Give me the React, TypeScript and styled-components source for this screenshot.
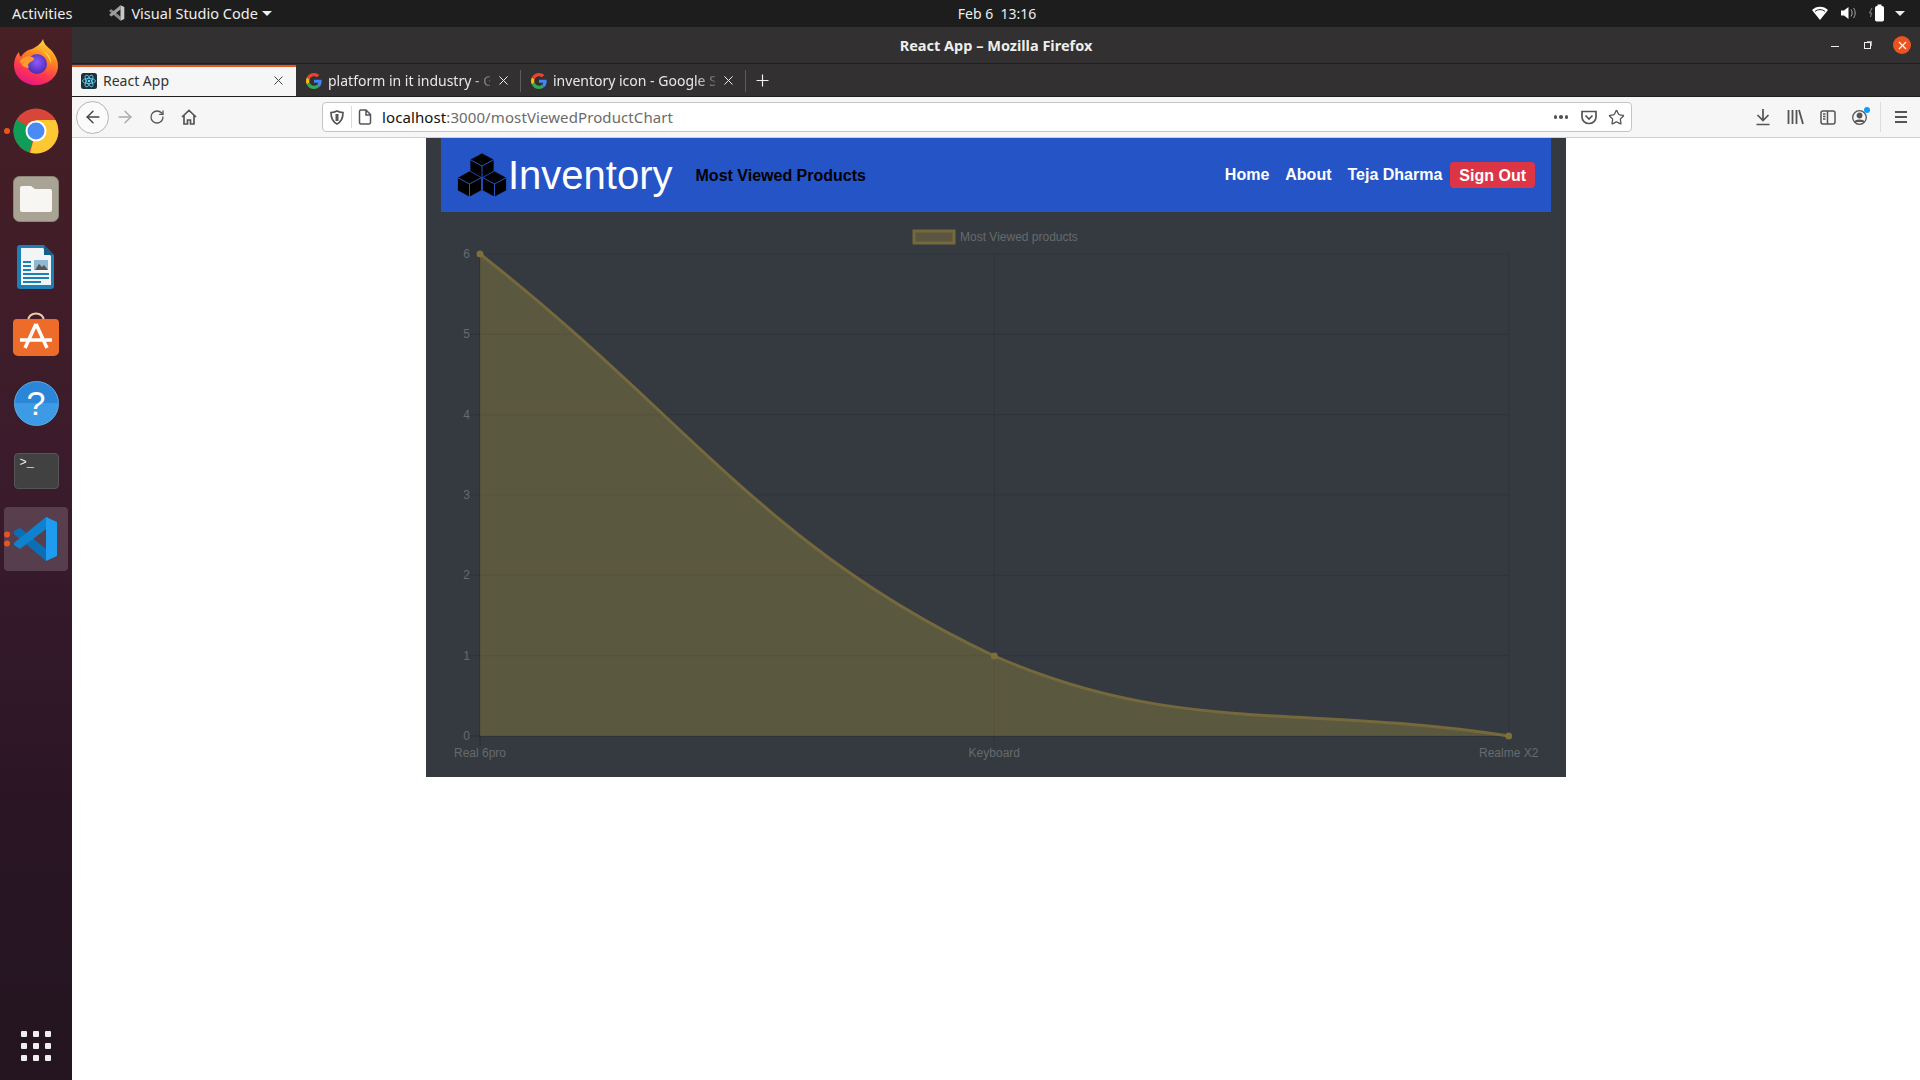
import React from 'react'
import styled, { createGlobalStyle } from 'styled-components'
import { ArrowLeft, ArrowRight, RotateCw, Star, X, Plus } from 'lucide-react'

const GlobalStyle = createGlobalStyle`
  html, body {
    margin: 0;
    padding: 0;
    height: 100%;
    background: #fff;
  }
  * {
    box-sizing: border-box;
  }
`

const UI_FONT = `'Noto Sans', 'Open Sans', sans-serif`
const PAGE_FONT = `'Liberation Sans', Arial, sans-serif`

const GoogleIcon = () => (
  <svg width="16" height="16" viewBox="0 0 48 48">
    <path fill="#EA4335" d="M24 9.5c3.5 0 6.7 1.2 9.2 3.6l6.9-6.9C35.9 2.4 30.4 0 24 0 14.6 0 6.5 5.4 2.6 13.2l8 6.2C12.5 13.6 17.8 9.5 24 9.5z" />
    <path fill="#4285F4" d="M47 24.5c0-1.6-.1-3.1-.4-4.5H24v9h12.900c-.6 3-2.200 5.500-4.700 7.200l7.700 6c4.500-4.200 7.100-10.300 7.100-17.700z" />
    <path fill="#FBBC05" d="M10.5 28.600c-.5-1.400-.8-3-.8-4.600s.3-3.200.8-4.600l-8-6.200C.9 16.400 0 20.100 0 24s.9 7.600 2.600 10.800l7.900-6.200z" />
    <path fill="#34A853" d="M24 48c6.500 0 11.900-2.100 15.900-5.800l-7.700-6c-2.100 1.400-4.900 2.300-8.200 2.300-6.200 0-11.500-4.200-13.400-9.800l-8 6.200C6.500 42.600 14.600 48 24 48z" />
  </svg>
)

const ReactIcon = () => (
  <svg width="16" height="16" viewBox="0 0 16 16">
    <rect width="16" height="16" rx="2.5" fill="#20303a" />
    <g fill="none" stroke="#61dafb" strokeWidth="0.8">
      <ellipse cx="8" cy="8" rx="6.5" ry="2.6" />
      <ellipse cx="8" cy="8" rx="6.5" ry="2.6" transform="rotate(60 8 8)" />
      <ellipse cx="8" cy="8" rx="6.5" ry="2.6" transform="rotate(120 8 8)" />
    </g>
    <circle cx="8" cy="8" r="1.3" fill="#61dafb" />
  </svg>
)

const FirefoxIcon = () => (
  <FirefoxSvg width="46" height="48" viewBox="0 0 46 48">
    <defs>
      <linearGradient id="ffBody" x1="0.7" y1="0" x2="0.3" y2="1">
        <stop offset="0" stopColor="#ffe23f" />
        <stop offset="0.35" stopColor="#ff8a1f" />
        <stop offset="0.7" stopColor="#ff3750" />
        <stop offset="1" stopColor="#e31587" />
      </linearGradient>
      <radialGradient id="ffGlobe" cx="0.5" cy="0.4" r="0.6">
        <stop offset="0" stopColor="#9059ff" />
        <stop offset="1" stopColor="#4b2bb0" />
      </radialGradient>
    </defs>
    <path d="M30 1c1 6 5 8 9 12 4 5 6 10 6 15 0 11-10 19-22 19S1 39 1 27c0-5 2-10 5-13 0 2 1 4 2 5 2-4 6-7 11-8 4-2 9-5 11-10z" fill="url(#ffBody)" />
    <circle cx="24" cy="26" r="10" fill="url(#ffGlobe)" />
    <path d="M7 23c3-4 8-6 12-4 3 1 3 3 0 4-3 2-5 3-3 7-5 0-8-3-9-7z" fill="#ff9a2a" />
    <path d="M30 13c5 2 9 7 8 13-1-4-3-8-8-13z" fill="#ffd23a" />
  </FirefoxSvg>
)

const ChromeIcon = () => (
  <svg width="46" height="46" viewBox="0 0 46 46">
    <circle cx="23" cy="23" r="22.5" fill="#d8463a" />
    <path d="M23 23 L3.5 11.7 A22.5 22.5 0 0 0 16 44.4 Z" fill="#109d58" />
    <path d="M23 12 L42.5 12 A22.5 22.5 0 0 1 17 44.7 L23 23 Z" fill="#fcc934" />
    <circle cx="23" cy="23" r="10.5" fill="#fff" />
    <circle cx="23" cy="23" r="8.5" fill="#4a8af4" />
  </svg>
)

const FilesIcon = () => (
  <svg width="46" height="46" viewBox="0 0 46 46">
    <rect x="0.5" y="0.5" width="45" height="45" rx="6" fill="#a8a394" stroke="#8c8778" />
    <path d="M7 12a2 2 0 0 1 2-2h9l4 3h15a2 2 0 0 1 2 2v19a2 2 0 0 1-2 2H9a2 2 0 0 1-2-2z" fill="#f7f6f3" />
  </svg>
)

const WriterIcon = () => (
  <svg width="38" height="46" viewBox="0 0 38 46">
    <path d="M3 1h24l10 10v31a3 3 0 0 1-3 3H3a3 3 0 0 1-3-3V4a3 3 0 0 1 3-3z" fill="#1c7fb5" />
    <path d="M4 4h22l8 8v29H4z" fill="#f2f4f6" />
    <path d="M27 1l10 10H27z" fill="#145f8c" />
    <rect x="17" y="16" width="14" height="10" fill="#8eb8d4" />
    <path d="M18 26l4-6 3 3 2-2 4 5z" fill="#555" />
    <g fill="#1c7fb5">
      <rect x="6" y="17" width="8" height="2" />
      <rect x="6" y="21" width="8" height="2" />
      <rect x="6" y="25" width="8" height="2" />
      <rect x="6" y="29" width="26" height="2" />
      <rect x="6" y="33" width="26" height="2" />
      <rect x="6" y="37" width="18" height="2" />
    </g>
  </svg>
)

const StoreIcon = () => (
  <svg width="46" height="46" viewBox="0 0 46 46">
    <path d="M15 9c0-10 16-10 16 0" fill="none" stroke="#f3c9a5" strokeWidth="2" />
    <path d="M4 7h38a4 4 0 0 1 4 4v28a5 5 0 0 1-5 5H5a5 5 0 0 1-5-5V11a4 4 0 0 1 4-4z" fill="#ee6c2a" />
    <path d="M23 12L12 36M23 12l11 24M7 28h32" stroke="#fff" strokeWidth="3.5" fill="none" />
  </svg>
)

const HelpIcon = () => <HelpBadge>?</HelpBadge>

const TerminalIcon = () => <TerminalBadge>&gt;_</TerminalBadge>

const VsCodeIcon = ({ size = 46, mono = false }: { size?: number; mono?: boolean }) => (
  <svg width={size} height={size} viewBox="0 0 46 46">
    <path d="M7 12L33 33V45L1 18V15z" fill={mono ? '#8a8a8a' : '#0a6fb5'} />
    <path d="M33 1V13L7 33 1 29V27z" fill={mono ? '#a0a0a0' : '#0f82cf'} />
    <path d="M33 1L44 6V40L33 45z" fill={mono ? '#c8c8c8' : '#1f9cf0'} />
  </svg>
)

// three stacked cubes of the navbar logo
const cubes = [
  { x: 25, y: 0 },
  { x: 12.5, y: 18 },
  { x: 37.5, y: 18 }
]

const CubesLogo = () => (
  <svg width="50" height="44" viewBox="0 0 50 44">
    {cubes.map(c => (
      <g key={c.x} transform={`translate(${c.x} ${c.y})`}>
        <path d="M0 0L12 6.5V19.500L0 26-12 19.500V6.500z" fill="#000" stroke="#2554c7" strokeWidth="0.8" />
        <path d="M-12 6.500L0 13 12 6.500M0 13V26" fill="none" stroke="#2554c7" strokeWidth="1" />
      </g>
    ))}
  </svg>
)

const dockApps: { icon: React.ReactNode; dots?: number; active?: boolean }[] = [
  { icon: <FirefoxIcon /> },
  { icon: <ChromeIcon />, dots: 1 },
  { icon: <FilesIcon /> },
  { icon: <WriterIcon /> },
  { icon: <StoreIcon /> },
  { icon: <HelpIcon /> },
  { icon: <TerminalIcon /> },
  { icon: <VsCodeIcon />, dots: 2, active: true }
]

const gridColor = '#2f343a'
const axisColor = '#282c31'
const labelColor = '#676a6c'

const plotX = [39, 553.3, 1067.7]
const yTicks = [6, 5, 4, 3, 2, 1, 0].map((v, i) => ({ v, y: 42 + (i * 482) / 6 }))
const xLabels = ['Real 6pro', 'Keyboard', 'Realme X2']

const curve = 'M39 42 C244.7 202.8 324.4 336.7 553.3 444 C735.9 524 862 492 1067.7 524'

const Chart = () => (
  <ChartSvg viewBox="0 0 1110 565">
    <rect x="473" y="19" width="40" height="12" fill="#5c5640" stroke="#75683c" strokeWidth="3" />
    <text x="519" y="29" fontSize="12" fill={labelColor} fontFamily={PAGE_FONT}>
      Most Viewed products
    </text>

    {yTicks.map(t => (
      <g key={t.v}>
        <line x1="29" x2="1068" y1={t.y} y2={t.y} stroke={t.v === 0 ? axisColor : gridColor} />
        <text x="29" y={t.y + 4} fontSize="12" textAnchor="end" fill={labelColor} fontFamily={PAGE_FONT}>
          {t.v}
        </text>
      </g>
    ))}
    {plotX.map((x, i) => (
      <g key={x}>
        <line x1={x} x2={x} y1="42" y2="534" stroke={i === 0 ? axisColor : gridColor} />
        <text x={x} y="545" fontSize="12" textAnchor="middle" fill={labelColor} fontFamily={PAGE_FONT}>
          {xLabels[i]}
        </text>
      </g>
    ))}

    <path d={`${curve} L39 524 Z`} fill="#b39b3c" fillOpacity="0.31" />
    <path d={curve} fill="none" stroke="#75683c" strokeWidth="3" />
    <circle cx="39" cy="42" r="3.5" fill="#7d6e3c" />
    <circle cx="553.3" cy="444" r="3.5" fill="#7d6e3c" />
    <circle cx="1067.7" cy="524" r="3.5" fill="#7d6e3c" />
  </ChartSvg>
)

const App: React.FC = () => (
  <Desktop>
    <GlobalStyle />

    <TopBar>
      <TopLeft>
        <span>Activities</span>
        <AppMenu>
          <VsCodeIcon size={16} mono />
          <span>Visual Studio Code</span>
          <MenuCaret />
        </AppMenu>
      </TopLeft>
      <Clock>Feb 6&nbsp;&nbsp;13:16</Clock>
      <TopRight>
        <svg width="16" height="14" viewBox="0 0 16 14">
          <path d="M0 4C4-.5 12-.5 16 4L8 14z" fill="#fff" />
          <path d="M3 5.5C5.5 3 10.5 3 13 5.5" stroke="#1d1d1d" strokeWidth="1" fill="none" />
        </svg>
        <svg width="15" height="14" viewBox="0 0 15 14">
          <path d="M0 4.5h3L7.5 1v12L3 9.5H0z" fill="#fff" />
          <path d="M10 3.5c1.5 2 1.5 5 0 7M12.5 2c2.2 3 2.2 7 0 10" stroke="#aaa" strokeWidth="1" fill="none" />
        </svg>
        <svg width="15" height="18" viewBox="0 0 15 18">
          <path d="M3 4L0.5 9H2.5L1.5 13" stroke="#888" strokeWidth="1" fill="none" />
          <rect x="6.5" y="2.5" width="8" height="14.5" rx="1" fill="#fff" stroke="#fff" />
          <rect x="8.5" y="0.5" width="4" height="2" fill="#fff" />
        </svg>
        <TrayCaret />
      </TopRight>
    </TopBar>

    <Workspace>
      <Dock>
        {dockApps.map((app, i) => (
          <DockItem key={i} $active={app.active}>
            {app.dots ? (
              <DockDots>
                {Array.from({ length: app.dots }).map((_, d) => (
                  <DockDot key={d} />
                ))}
              </DockDots>
            ) : null}
            {app.icon}
          </DockItem>
        ))}
        <AppGrid>
          {Array.from({ length: 9 }).map((_, i) => (
            <AppGridDot key={i} />
          ))}
        </AppGrid>
      </Dock>

      <Browser>
        <TitleBar>
          <TitleText>React App – Mozilla Firefox</TitleText>
          <WindowControls>
            <MinimizeMark />
            <RestoreMark />
            <CloseCircle>
              <X size={13} strokeWidth={2} />
            </CloseCircle>
          </WindowControls>
        </TitleBar>

        <TabBar>
          <ActiveTab>
            <ReactIcon />
            <TabTitle>React App</TabTitle>
            <X size={15} strokeWidth={1.6} color="#444" />
          </ActiveTab>
          <Tab>
            <GoogleIcon />
            <FadedTitle>platform in it industry - G</FadedTitle>
            <X size={15} strokeWidth={1.6} color="#eee" />
          </Tab>
          <Tab>
            <GoogleIcon />
            <FadedTitle>inventory icon - Google S</FadedTitle>
            <X size={15} strokeWidth={1.6} color="#eee" />
          </Tab>
          <NewTab>
            <Plus size={19} strokeWidth={1.5} color="#f0f0f0" />
          </NewTab>
        </TabBar>

        <Toolbar>
          <BackButton>
            <ArrowLeft size={20} strokeWidth={1.7} color="#444" />
          </BackButton>
          <ToolButton>
            <ArrowRight size={20} strokeWidth={1.7} color="#aaa" />
          </ToolButton>
          <ToolButton>
            <RotateCw size={16} strokeWidth={1.9} color="#555" />
          </ToolButton>
          <ToolButton>
            <svg width="16" height="16" viewBox="0 0 16 16" fill="none" stroke="#555" strokeWidth="1.7">
              <path d="M1 8l7-6.5L15 8M3 6.5V15h3.5v-4h3v4H13V6.5" />
            </svg>
          </ToolButton>

          <UrlBar>
            <UrlIcon>
              <svg width="14" height="15" viewBox="0 0 14 15" fill="none" stroke="#555" strokeWidth="1.7">
                <path d="M1 2.5C3 2.5 5 2 7 1c2 1 4 1.5 6 1.5 0 5-1 9-6 11.5C2 11.5 1 7.5 1 2.5z" />
                <path d="M7 4v7" strokeWidth="3" />
              </svg>
            </UrlIcon>
            <UrlDivider />
            <UrlIcon>
              <svg width="14" height="16" viewBox="0 0 14 16" fill="none" stroke="#555" strokeWidth="1.5">
                <path d="M1.5 2.5a1.5 1.5 0 0 1 1.5-1.5h5l4.5 4.5v8a1.5 1.5 0 0 1-1.5 1.5H3a1.5 1.5 0 0 1-1.5-1.5zM8 1v5h4.5" />
              </svg>
            </UrlIcon>
            <UrlText>
              <strong>localhost</strong>:3000/mostViewedProductChart
            </UrlText>
            <UrlActions>
              <MoreDots>
                <i />
                <i />
                <i />
              </MoreDots>
              <svg width="16" height="16" viewBox="0 0 16 16" fill="none" stroke="#555" strokeWidth="1.7">
                <path d="M1 2.5h14V8c0 3.5-3 6.5-7 6.5S1 11.5 1 8z" />
                <path d="M4.5 6.5L8 10l3.5-3.5" />
              </svg>
              <Star size={17} strokeWidth={1.8} color="#555" />
            </UrlActions>
          </UrlBar>

          <RightTools>
            <svg width="16" height="18" viewBox="0 0 16 18" fill="none" stroke="#555" strokeWidth="1.7">
              <path d="M8 1v11M2.5 7L8 12.5 13.5 7M1.5 16.5h13" />
            </svg>
            <svg width="17" height="16" viewBox="0 0 17 16" fill="none" stroke="#555" strokeWidth="1.8">
              <path d="M1.5 1v14M5.5 1v14M9.5 1v14M12 1l4 14" />
            </svg>
            <svg width="16" height="15" viewBox="0 0 16 15" fill="none" stroke="#555" strokeWidth="1.5">
              <rect x="1" y="1" width="14" height="13" rx="2" />
              <path d="M7.5 1v13M3 4h2.5M3 6.5h2.5M3 9h2.5" />
            </svg>
            <AccountIcon>
              <svg width="15" height="15" viewBox="0 0 15 15" fill="none" stroke="#555" strokeWidth="1.3">
                <circle cx="7.5" cy="7.5" r="6.8" />
                <circle cx="7.5" cy="5.5" r="2.3" fill="#555" />
                <path d="M3 12c1-2.5 8-2.5 9 0" fill="#555" />
              </svg>
              <AccountBadge />
            </AccountIcon>
            <ToolSeparator />
            <svg width="14" height="14" viewBox="0 0 14 14" stroke="#555" strokeWidth="1.8">
              <path d="M1 2h12M1 7h12M1 12h12" />
            </svg>
          </RightTools>
        </Toolbar>

        <Page>
          <Container>
            <Navbar>
              <Brand>
                <CubesLogo />
                <BrandName>Inventory</BrandName>
              </Brand>
              <PageTitle>Most Viewed Products</PageTitle>
              <NavLinks>
                <NavLink>Home</NavLink>
                <NavLink>About</NavLink>
                <NavLink>Teja Dharma</NavLink>
                <SignOut>Sign Out</SignOut>
              </NavLinks>
            </Navbar>
            <Chart />
          </Container>
        </Page>
      </Browser>
    </Workspace>
  </Desktop>
)

const Desktop = styled.div`
  width: 1920px;
  height: 1080px;
  display: flex;
  flex-direction: column;
  overflow: hidden;
  font-family: ${UI_FONT};
`

const TopBar = styled.header`
  height: 27px;
  flex: none;
  background: #1d1d1d;
  color: #eee;
  font-size: 14.5px;
  display: grid;
  grid-template-columns: 945px 80px 1fr;
  align-items: center;
  padding: 0 12px 1px;
`

const TopLeft = styled.div`
  display: flex;
  align-items: center;
  gap: 37px;
`

const AppMenu = styled.div`
  display: flex;
  align-items: center;
  gap: 6px;
`

const Caret = styled.span`
  width: 0;
  height: 0;
  border-left: 5px solid transparent;
  border-right: 5px solid transparent;
  border-top: 5px solid #eee;
`

const MenuCaret = styled(Caret)`
  margin-left: -2px;
`

const TrayCaret = styled(Caret)`
  margin-left: -2px;
`

const Clock = styled.div`
  font-size: 14px;
  text-align: center;
  white-space: nowrap;
`

const TopRight = styled.div`
  display: flex;
  align-items: center;
  justify-content: flex-end;
  gap: 13px;
  padding-right: 3px;
`

const Workspace = styled.div`
  flex: 1;
  display: flex;
  min-height: 0;
`

const Dock = styled.nav`
  width: 72px;
  flex: none;
  display: flex;
  flex-direction: column;
  padding-top: 2px;
  background: linear-gradient(180deg, #471f24 0%, #3a1b2c 45%, #2a1525 75%, #241520 100%);
`

const DockItem = styled.div<{ $active?: boolean }>`
  position: relative;
  height: 68px;
  display: flex;
  align-items: center;
  justify-content: center;

  ${p =>
    p.$active &&
    `
    &::before {
      content: '';
      position: absolute;
      inset: 2px 4px;
      border-radius: 4px;
      background: rgba(255, 255, 255, 0.16);
    }
    & > svg { position: relative; }
  `}
`

const FirefoxSvg = styled.svg`
  margin-top: -2px;
`

const DockDots = styled.div`
  position: absolute;
  left: 4px;
  top: 50%;
  transform: translateY(-50%);
  display: flex;
  flex-direction: column;
  gap: 3px;
  z-index: 1;
`

const DockDot = styled.span`
  width: 6px;
  height: 6px;
  border-radius: 50%;
  background: #e95420;
`

const HelpBadge = styled.div`
  width: 45px;
  height: 45px;
  border-radius: 50%;
  background: linear-gradient(180deg, #2c86d8 0%, #2c86d8 50%, #3d9be6 50%, #3d9be6 100%);
  border: 1px solid #5aaceb;
  color: #fff;
  font-family: ${PAGE_FONT};
  font-size: 34px;
  line-height: 43px;
  text-align: center;
`

const TerminalBadge = styled.div`
  width: 45px;
  height: 36px;
  border-radius: 4px;
  background: #414141;
  border: 1px solid #555;
  color: #eee;
  font-family: 'Liberation Mono', monospace;
  font-size: 12px;
  line-height: 12px;
  padding: 3px 5px;
`

const AppGrid = styled.div`
  margin-top: auto;
  margin-bottom: 19px;
  align-self: center;
  display: grid;
  grid-template-columns: repeat(3, 6px);
  gap: 6px;
`

const AppGridDot = styled.span`
  width: 6px;
  height: 6px;
  border-radius: 1px;
  background: #efefef;
`

const Browser = styled.main`
  flex: 1;
  min-width: 0;
  display: flex;
  flex-direction: column;
`

const TitleBar = styled.div`
  position: relative;
  height: 37px;
  flex: none;
  background: #323030;
  border-bottom: 1px solid #1e1e1e;
  display: flex;
  align-items: center;
  justify-content: center;
`

const TitleText = styled.div`
  color: #eee;
  font-size: 14.5px;
  font-weight: 700;
`

const WindowControls = styled.div`
  position: absolute;
  right: 9px;
  top: 9px;
  display: flex;
  align-items: center;
  gap: 25px;
`

const MinimizeMark = styled.span`
  width: 8px;
  height: 1px;
  margin-top: 3px;
  background: #eee;
`

const RestoreMark = styled.span`
  width: 7px;
  height: 7px;
  border: 1px solid #eee;
  box-shadow: 2px -2px 0 -1px #aaa;
  margin-right: -3px;
`

const CloseCircle = styled.span`
  width: 18px;
  height: 18px;
  border-radius: 50%;
  background: #e95420;
  color: #fff;
  display: flex;
  align-items: center;
  justify-content: center;
`

const TabBar = styled.div`
  height: 33px;
  flex: none;
  background: #323030;
  display: flex;
  align-items: stretch;
  border-bottom: 1px solid #1e1e1e;
`

const ActiveTab = styled.div`
  width: 224px;
  margin-top: 1px;
  background: #f6f6f6;
  border-top: 2px solid #e95420;
  color: #333;
  font-size: 14px;
  display: flex;
  align-items: center;
  gap: 6px;
  padding: 0 10px 2px 9px;
`

const TabTitle = styled.span`
  flex: 1;
  white-space: nowrap;
`

const Tab = styled.div`
  width: 225px;
  color: #e8e8e8;
  font-size: 14px;
  display: flex;
  align-items: center;
  gap: 6px;
  padding: 1px 10px 0 10px;
  position: relative;

  &::after {
    content: '';
    position: absolute;
    right: 0;
    top: 6px;
    bottom: 4px;
    width: 1px;
    background: #5c5a5a;
  }
`

const FadedTitle = styled.span`
  flex: 1;
  min-width: 0;
  white-space: nowrap;
  -webkit-mask-image: linear-gradient(90deg, #000 88%, rgba(0, 0, 0, 0.25) 100%);
  mask-image: linear-gradient(90deg, #000 88%, rgba(0, 0, 0, 0.25) 100%);
`

const NewTab = styled.div`
  width: 32px;
  display: flex;
  align-items: center;
  justify-content: center;
`

const Toolbar = styled.div`
  height: 41px;
  flex: none;
  background: #f6f6f6;
  border-bottom: 1px solid #cfcfcf;
  display: flex;
  align-items: center;
  padding-left: 4px;
`

const BackButton = styled.div`
  width: 33px;
  height: 33px;
  border-radius: 50%;
  border: 1px solid #b5b5b5;
  background: #fbfbfb;
  display: flex;
  align-items: center;
  justify-content: center;
`

const ToolButton = styled.div`
  width: 32px;
  height: 32px;
  display: flex;
  align-items: center;
  justify-content: center;
`

const UrlBar = styled.div`
  width: 1310px;
  height: 30px;
  margin-left: 117px;
  background: #fff;
  border: 1px solid #c4c4c4;
  border-radius: 4px;
  display: flex;
  align-items: center;
  padding: 0 6px;
`

const UrlIcon = styled.span`
  width: 16px;
  display: flex;
  justify-content: center;
`

const UrlDivider = styled.span`
  width: 1px;
  height: 22px;
  background: #dcdcdc;
  margin: 0 5px 0 6px;
`

const UrlText = styled.div`
  flex: 1;
  margin-left: 9px;
  color: #6b6b6b;
  font-size: 15px;
  letter-spacing: 0.1px;

  strong {
    color: #111;
    font-weight: 400;
  }
`

const UrlActions = styled.div`
  display: flex;
  align-items: center;
  gap: 11px;
`

const MoreDots = styled.span`
  display: flex;
  gap: 2px;
  margin-right: 2px;

  i {
    width: 3.5px;
    height: 3.5px;
    border-radius: 50%;
    background: #555;
  }
`

const RightTools = styled.div`
  flex: 1;
  display: flex;
  align-items: center;
  justify-content: flex-end;
  gap: 16px;
  padding-right: 12px;
`

const AccountIcon = styled.span`
  position: relative;
  display: flex;
`

const AccountBadge = styled.span`
  position: absolute;
  right: -3px;
  top: -3px;
  width: 6px;
  height: 6px;
  border-radius: 50%;
  background: #0a9dff;
`

const ToolSeparator = styled.span`
  width: 1px;
  height: 30px;
  margin: 0 -3px;
  background: #dcdcdc;
`

const Page = styled.div`
  flex: 1;
  min-height: 0;
  background: #fff;
`

const Container = styled.div`
  width: 1140px;
  margin: 0 auto;
  padding: 0 15px;
  background: #343a40;
  font-family: ${PAGE_FONT};
`

const Navbar = styled.div`
  height: 74px;
  background: #2554c7;
  display: flex;
  align-items: center;
  padding: 0 16px;
`

const Brand = styled.div`
  display: flex;
  align-items: center;
  gap: 1px;
`

const BrandName = styled.span`
  color: #fff;
  font-size: 40px;
  line-height: 48px;
`

const PageTitle = styled.span`
  margin: 2px 0 0 23px;
  color: #000;
  font-size: 16px;
  font-weight: 700;
`

const NavLinks = styled.div`
  margin-left: auto;
  display: flex;
  align-items: center;
`

const NavLink = styled.span`
  color: #fff;
  font-size: 16px;
  font-weight: 700;
  margin-right: 16px;

  &:nth-child(3) {
    margin-right: 8px;
  }
`

const SignOut = styled.span`
  height: 26px;
  padding: 0 9px;
  background: #dc3545;
  border-radius: 4px;
  color: #fff;
  font-size: 16px;
  font-weight: 700;
  line-height: 27px;
`

const ChartSvg = styled.svg`
  display: block;
  width: 1110px;
  height: 565px;
`

export default App
